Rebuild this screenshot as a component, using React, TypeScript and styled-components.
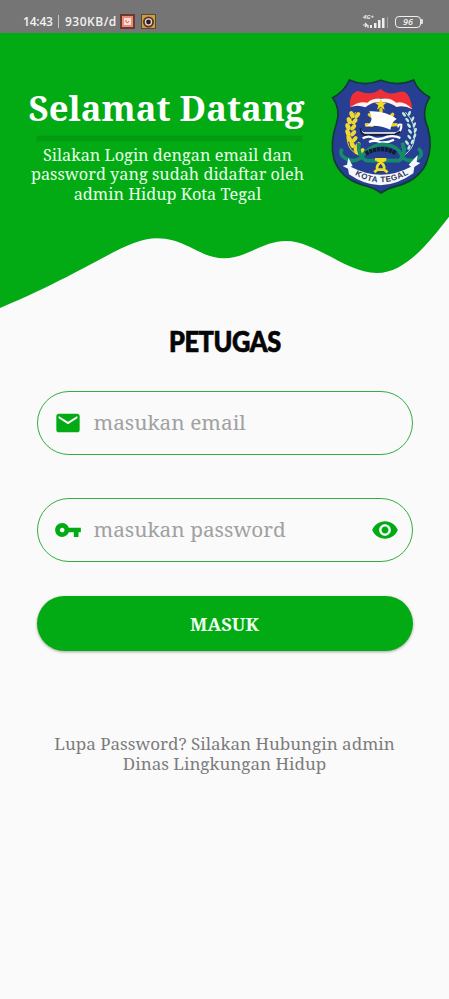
import React from "react";
import styled, { createGlobalStyle } from "styled-components";

const green = "#02ab13";
const serif = '"Noto Serif", "Droid Serif", "DejaVu Serif Condensed", "DejaVu Serif", serif';

const GlobalStyle = createGlobalStyle`
  * { box-sizing: border-box; }
  body { margin: 0; background: #fafafa; }
`;

const Screen = styled.div`
  width: 449px;
  height: 999px;
  overflow: hidden;
  background: #fafafa;
  font-family: ${serif};
  display: flex;
  flex-direction: column;
`;

const StatusBar = styled.div`
  height: 33px;
  flex: none;
  background: #757575;
  color: #f2f2f2;
  display: flex;
  align-items: center;
  padding: 10px 26px 0 23px;
  font: 600 12px/22px "Open Sans", sans-serif;
`;

const StatusText = styled.span<{ $width: number; $spacing?: number }>`
  width: ${(p) => p.$width}px;
  letter-spacing: ${(p) => p.$spacing ?? 0}px;
  white-space: nowrap;
`;

const Separator = styled.span`
  width: 1px;
  height: 13px;
  margin: 0 6px 0 5px;
  background: #c4c4c4;
`;

const AppIcon = styled.svg`
  width: 15px;
  height: 15px;
  margin-right: 6px;
`;

const Signal = styled.svg`
  width: 28px;
  height: 17px;
  margin-left: auto;
  margin-right: 5px;
`;

const Battery = styled.div`
  width: 26px;
  height: 12px;
  border: 1.5px solid #eee;
  border-radius: 4px;
  display: flex;
  align-items: center;
  justify-content: center;
  font: italic 600 9px/9px "Open Sans", sans-serif;
`;

const BatteryTip = styled.span`
  width: 2px;
  height: 5px;
  background: #ddd;
  border-radius: 0 1px 1px 0;
`;

const Hero = styled.header`
  height: 177px;
  flex: none;
  background: ${green};
  color: #fff;
  display: flex;
  align-items: flex-start;
  padding-left: 17px;
`;

const Intro = styled.div`
  width: 301px;
  display: flex;
  flex-direction: column;
  align-items: center;
  padding-top: 50px;
`;

const Title = styled.h1`
  margin: 0 2px 0 0;
  font-size: 34.7px;
  line-height: 50px;
  font-weight: 700;
  white-space: nowrap;
`;

const Rule = styled.div`
  width: 265px;
  height: 5px;
  margin: 3px 0 5px 4px;
  background: #029a10;
  box-shadow: 0 0 2px #029a10;
`;

const Line = styled.span`
  display: block;
  white-space: nowrap;
`;

const Subtitle = styled.p`
  margin: 0;
  font-size: 16.3px;
  line-height: 19.3px;
  text-align: center;
  color: #e9ffe9;
`;

const Crest = styled.svg`
  width: 112px;
  height: 126px;
  margin: 39px 0 0 7px;
  flex: none;
`;

const Wave = styled.svg`
  width: 449px;
  height: 98px;
  flex: none;
  display: block;
`;

const Main = styled.main`
  display: flex;
  flex-direction: column;
  align-items: center;
  padding: 13px 36px 0;
`;

const Role = styled.h2`
  margin: 0 0 30px;
  font: 900 28px/40px Lato, sans-serif;
  letter-spacing: -0.4px;
  transform: scaleX(0.905);
  -webkit-text-stroke: 0.7px #050505;
  color: #050505;
`;

const Field = styled.label`
  width: 376px;
  height: 64px;
  border: 1.5px solid #2fb040;
  border-radius: 32px;
  display: flex;
  align-items: center;
  padding: 0 13px 0 16px;
  margin-bottom: 43px;
  color: ${green};

  & + & {
    margin-bottom: 34px;
    padding-bottom: 1px;
  }
`;

const Icon = styled.svg`
  width: 28px;
  height: 28px;
  flex: none;
  fill: currentColor;
`;

const Input = styled.input`
  flex: 1;
  min-width: 0;
  height: 40px;
  margin-left: 12px;
  padding: 0 0 2px;
  border: 0;
  outline: 0;
  background: transparent;
  font: 20.8px ${serif};

  &::placeholder { color: #a1a1a1; opacity: 1; }
`;

const Submit = styled.button`
  width: 376px;
  height: 55px;
  border: 0;
  border-radius: 28px;
  background: ${green};
  box-shadow: 0 1px 3px rgba(0, 0, 0, 0.35);
  color: #effff0;
  font: 700 18.3px ${serif};
`;

const Help = styled.p`
  margin: 83px 0 0;
  font-size: 17.05px;
  line-height: 20px;
  text-align: center;
  color: #7c7c7c;
`;

const leaves = [0, 1, 2, 3, 4, 5, 6];

function CityCrest() {
  return (
    <Crest viewBox="0 0 336 378">
      <path
        d="M73 24 Q119 45 167 25 Q219 45 266 24 Q278 57 314 76 Q287 118 308 166 Q325 224 303 276 Q277 327 212 343 Q187 349 168 363 Q147 347 112 339 Q46 319 27 262 Q14 213 34 155 Q48 111 23 77 Q58 59 73 24Z"
        fill="#273f92" stroke="#123a35" strokeWidth="5"
      />
      <path d="M75 106 Q72 62 100 57 Q140 73 167 50 Q188 72 222 60 Q254 50 262 112 Q240 97 218 100 Q194 78 168 78 Q141 78 121 101 Q92 95 75 106Z" fill="#ee3036" />
      <path d="M75 106 Q102 86 127 92 Q145 77 168 80 Q197 76 214 92 Q239 86 262 112 Q237 98 215 105 Q190 88 167 90 Q143 88 121 106 Q96 97 75 106Z" fill="#fff1ed" />
      <path d="M167 79 L172 91 L185 92 L175 100 L179 113 L167 105 L156 113 L160 100 L149 92 L163 91Z" fill="#f5db22" />
      <g stroke="#f0cf23" strokeWidth="10" strokeLinecap="round">
        <path d="M133 128 L151 140 M203 127 L190 143 M124 158 L142 160 M196 159 L214 158 M168 112 V130" />
      </g>
      <path d="M93 120 Q59 157 67 207 Q72 238 103 250" fill="none" stroke="#efcf22" strokeWidth="3" />
      {leaves.map((i) => {
        const y = 128 + i * 18;
        const x = [88, 80, 76, 76, 80, 89, 101][i];
        return (
          <g key={i} fill="#f0d832">
            <ellipse cx={x - 7} cy={y} rx="7" ry="11" transform={`rotate(-25 ${x - 7} ${y})`} />
            <ellipse cx={x + 9} cy={y + 2} rx="6" ry="11" transform={`rotate(38 ${x + 9} ${y + 2})`} />
          </g>
        );
      })}
      <path d="M241 120 Q276 155 268 204 Q264 230 239 249" fill="none" stroke="#b4ddd2" strokeWidth="3" />
      {leaves.map((i) => {
        const y = 124 + i * 17;
        const x = [245, 255, 260, 263, 261, 254, 244][i];
        return (
          <g key={i} fill="#c4ead9">
            <ellipse cx={x + 8} cy={y} rx="4" ry="8" transform={`rotate(25 ${x + 8} ${y})`} />
            <ellipse cx={x - 8} cy={y + 3} rx="4" ry="8" transform={`rotate(-38 ${x - 8} ${y + 3})`} />
          </g>
        );
      })}
      <path d="M133 118 Q183 116 215 141 Q200 149 196 173 Q158 155 119 164 Q151 151 133 118Z" fill="#fff" />
      <path d="M107 173 Q109 184 121 184 H213 Q231 178 229 158 Q218 155 220 166" fill="none" stroke="#fff" strokeWidth="6" />
      <path d="M107 169 Q106 184 118 188 H209 L226 179" fill="none" stroke="#171b37" strokeWidth="6" />
      <path d="M113 199 Q131 189 145 198 Q165 205 184 195 Q207 189 226 198 M132 210 Q149 202 166 211 Q188 213 207 203" fill="none" stroke="#fff" strokeWidth="7" />
      <path d="M52 230 Q44 239 51 251 Q77 276 108 258 Q119 237 150 222 Q171 212 202 223 Q224 231 233 258 Q263 277 287 252 Q292 237 279 230 M101 213 Q98 254 125 266 L222 266 Q246 250 232 212" fill="none" stroke="#158b69" strokeWidth="11" />
      <path d="M122 245 Q166 218 214 244" fill="none" stroke="#111b34" strokeWidth="13" strokeDasharray="10 2" />
      <path d="M70 257 L83 282 L77 284 Q168 332 258 284 L251 278 L278 249 L275 269 L286 273 L268 285 L265 304 Q168 374 72 307 L69 290 L53 282 L66 278Z" fill="#f5f7ff" />
      <path d="M150 262 H184 M156 264 Q182 276 177 293 H157 Q151 276 180 264 M158 292 L148 301 M176 292 L188 301" fill="none" stroke="#f2dc24" strokeWidth="8" />
      <path id="motto" d="M84 305 Q169 358 257 302" fill="none" />
      <text fill="#303657" fontFamily="Liberation Sans, sans-serif" fontWeight="700" fontSize="24">
        <textPath href="#motto" startOffset="6" textLength="170">KOTA TEGAL</textPath>
      </text>
    </Crest>
  );
}

export default function App() {
  return (
    <>
      <GlobalStyle />
      <Screen>
        <StatusBar>
          <StatusText $width={30} $spacing={-0.2}>14:43</StatusText>
          <Separator />
          <StatusText $width={55} $spacing={0.5}>930KB/d</StatusText>
          <AppIcon viewBox="0 0 15 15">
            <path d="M0 0H15V15H0Z" fill="#683a32" />
            <path d="M2 2H13V13H2Z" fill="#ed8a78" />
            <path d="M4 4H11V11H4Z" fill="#ffded5" />
            <path d="M6 6V8Q8 10 9 7" fill="none" stroke="#c65f54" />
          </AppIcon>
          <AppIcon viewBox="0 0 15 15">
            <path d="M0 0H15V15H0Z" fill="#5a4834" />
            <path d="M1 1H14V14H1Z" fill="#c7a23c" />
            <circle cx="7.5" cy="8" r="5.5" fill="#5d3028" />
            <circle cx="7.5" cy="8" r="3.7" fill="#e8d9d1" />
            <circle cx="7.5" cy="8" r="2.4" fill="#271e2d" />
          </AppIcon>
          <Signal viewBox="0 0 28 17">
            <text x="1" y="6" fill="#eee" fontSize="6" fontStyle="italic" fontWeight="700" fontFamily="Open Sans, sans-serif">4G+</text>
            <path d="M1 12h4M3 10l2 2-2 2M6 12v3" fill="none" stroke="#eee" strokeWidth="1.2" />
            <path d="M8 12h2v3H8zM12 10h2.5v5H12zM16 7h2.5v8H16zM20 5h2.5v10H20z" fill="#eee" />
            <path d="M25 4h1v11h-1z" fill="#a0a0a0" />
          </Signal>
          <Battery>96</Battery>
          <BatteryTip />
        </StatusBar>
        <Hero>
          <Intro>
            <Title>Selamat Datang</Title>
            <Rule />
            <Subtitle>
              <Line>Silakan Login dengan email dan</Line>
              <Line>password yang sudah didaftar oleh</Line>
              <Line>admin Hidup Kota Tegal</Line>
            </Subtitle>
          </Intro>
          <CityCrest />
        </Hero>
        <Wave viewBox="0 0 449 98">
          <path fill={green} d="M0 0H449V6.7C430 31 406 63 377 63C346 63 316 31 286 31C262 31 247 48.3 224 48.3C200 48.3 186 28.3 157 28.3C125 28.3 97 57 0 98Z" />
        </Wave>
        <Main>
          <Role>PETUGAS</Role>
          <Field>
            <Icon viewBox="0 0 24 24">
              <path d="M20 4H4c-1.1 0-2 .9-2 2v12c0 1.1.9 2 2 2h16c1.1 0 2-.9 2-2V6c0-1.1-.9-2-2-2zm0 4-8 5-8-5V6l8 5 8-5v2z" />
            </Icon>
            <Input type="email" placeholder="masukan email" />
          </Field>
          <Field>
            <Icon viewBox="0 0 24 24">
              <path d="M12.65 10C11.83 7.67 9.61 6 7 6c-3.31 0-6 2.69-6 6s2.69 6 6 6c2.61 0 4.83-1.67 5.65-4H17v4h4v-4h2v-4H12.65zM7 14c-1.1 0-2-.9-2-2s.9-2 2-2 2 .9 2 2-.9 2-2 2z" />
            </Icon>
            <Input type="password" placeholder="masukan password" />
            <Icon viewBox="0 0 24 24">
              <path d="M12 4.5C7 4.5 2.73 7.61 1 12c1.73 4.39 6 7.5 11 7.5s9.27-3.11 11-7.5c-1.73-4.39-6-7.5-11-7.5zM12 17c-2.76 0-5-2.24-5-5s2.24-5 5-5 5 2.24 5 5-2.24 5-5 5zm0-8c-1.66 0-3 1.34-3 3s1.34 3 3 3 3-1.34 3-3-1.34-3-3-3z" />
            </Icon>
          </Field>
          <Submit type="button">MASUK</Submit>
          <Help>
            <Line>Lupa Password? Silakan Hubungin admin</Line>
            <Line>Dinas Lingkungan Hidup</Line>
          </Help>
        </Main>
      </Screen>
    </>
  );
}
